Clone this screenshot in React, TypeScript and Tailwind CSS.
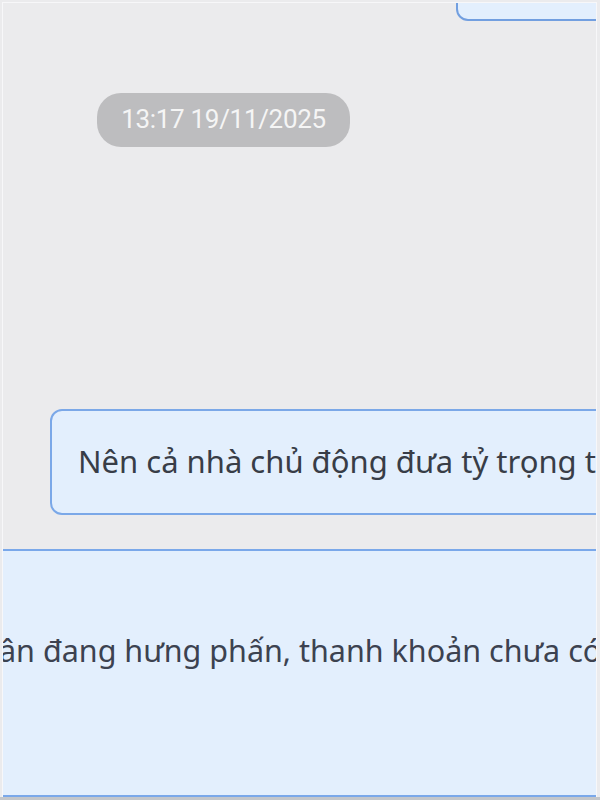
import React from "react";

export default function App() {
  return (
    <div className="w-[600px] h-[800px] bg-[#ebebed] overflow-hidden flex flex-col" style={{ fontFamily: '"Noto Sans", "Liberation Sans", sans-serif' }}>
      <div className="mt-[2px] ml-[2px] mr-[3px] h-[795px] border-l border-r border-t border-[#f7f7f9] overflow-hidden flex flex-col">
        {/* top bubble tail */}
        <div className="flex">
          <div className="ml-[453px] flex-1 h-[18px] bg-[#e3effd] border-2 border-t-0 border-[#729fe0] rounded-bl-[12px] -mr-[4px]" />
        </div>

        {/* timestamp */}
        <div className="mt-[72px] ml-[94px] w-[253px] h-[54px] rounded-[24px] bg-[#bdbdbf] flex items-center justify-center">
          <span className="text-[26px] text-[#f5f5f5] tracking-[-0.3px]" style={{ fontFamily: 'Roboto, "Noto Sans", sans-serif' }}>
            13:17 19/11/2025
          </span>
        </div>

        {/* middle bubble */}
        <div className="mt-[262px] ml-[47px] -mr-[40px] h-[106px] bg-[#e3effd] border-2 border-[#7ba8e8] rounded-[12px] flex items-center pl-[26px] overflow-hidden">
          <span className="text-[31px] text-[#383d47] whitespace-nowrap leading-none">
            Nên cả nhà chủ động đưa tỷ trọng t
          </span>
        </div>

        {/* bottom panel */}
        <div className="mt-[34px] -ml-[3px] -mr-[3px] h-[249px] bg-[#e3effd] border-t-2 border-b-2 border-[#7aa8ea] overflow-hidden pt-[84px]">
          <div className="text-[30.5px] text-[#3c4250] whitespace-nowrap leading-none -ml-[1px]">
            ân đang hưng phấn, thanh khoản chưa có
          </div>
        </div>
      </div>
      <div className="flex-1 bg-[#c3c6ca]" />
    </div>
  );
}
